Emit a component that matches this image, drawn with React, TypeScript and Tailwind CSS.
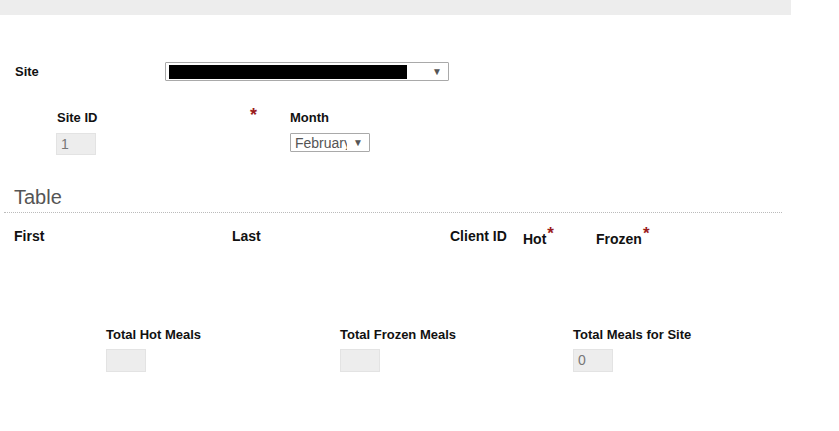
export default function App() {
  return (
    <div className="min-h-screen bg-white font-['Liberation_Sans',Arial,sans-serif] text-[13px] text-[#111]">
      {/* top bar */}
      <div className="h-[15px] w-[791px] bg-[#ededed]" />

      {/* Site row */}
      <div className="mt-[47px] flex h-[19px] items-center pl-[15px]">
        <div className="w-[150px] font-bold">Site</div>
        <div className="flex h-[19px] w-[284px] items-center rounded-[1px] border border-[#a9a9a9] bg-white pl-[3px] pr-[6px]">
          <div className="h-[14px] w-[238px] bg-black" />
          <div className="flex-1" />
          <span className="text-[10px] leading-none text-[#555]">▼</span>
        </div>
      </div>

      {/* Site ID / Month */}
      <div className="mt-[29px] flex pl-[56px]">
        <div className="w-[194px]">
          <div className="h-[15px] pl-px font-bold leading-[15px]">Site ID</div>
          <div className="mt-[8px] flex h-[22px] w-[40px] items-center border border-[#e3e3e3] bg-[#ededed] pl-[4px] text-[14px] text-[#777]">
            1
          </div>
        </div>
        <div className="w-[40px]">
          <span className="-mt-[4px] block text-[18px] font-bold leading-[18px] text-[#9b1c1c]">*</span>
        </div>
        <div>
          <div className="h-[15px] font-bold leading-[15px]">Month</div>
          <div className="mt-[8px] flex h-[19px] w-[80px] items-center overflow-hidden rounded-[1px] border border-[#a9a9a9] pl-[4px] pr-[6px]">
            <span className="w-[52px] shrink-0 overflow-hidden whitespace-nowrap text-[14px] leading-none text-[#555]">February</span>
            <div className="flex-1" />
            <span className="text-[10px] leading-none text-[#555]">▼</span>
          </div>
        </div>
      </div>

      {/* Table heading */}
      <div className="ml-[4px] mt-[30px] w-[778px] border-b border-dotted border-[#bbb] pb-[3px] pl-[10px]">
        <h2 className="text-[20px] leading-[24px] text-[#555]">Table</h2>
      </div>

      {/* Header row */}
      <div className="mt-[16px] flex pl-[14px] text-[14px] font-bold leading-[15px]">
        <div className="w-[218px]">First</div>
        <div className="w-[218px]">Last</div>
        <div className="w-[73px]">Client ID</div>
        <div className="w-[73px] pt-[2px]">
          Hot<span className="relative -top-[5px] ml-px text-[17px] text-[#9b1c1c]">*</span>
        </div>
        <div className="pt-[2px]">
          Frozen<span className="relative -top-[5px] ml-px text-[17px] text-[#9b1c1c]">*</span>
        </div>
      </div>

      {/* Totals */}
      <div className="mt-[80px] flex pl-[106px]">
        {[
          { label: 'Total Hot Meals', value: '', w: 'w-[234px]' },
          { label: 'Total Frozen Meals', value: '', w: 'w-[233px]' },
          { label: 'Total Meals for Site', value: '0', w: 'w-[234px]' },
        ].map((t) => (
          <div key={t.label} className={t.w}>
            <div className="h-[15px] font-bold leading-[15px]">{t.label}</div>
            <div className="mt-[7px] flex h-[23px] w-[40px] items-center border border-[#e3e3e3] bg-[#ededed] pl-[4px] text-[14px] text-[#777]">
              {t.value}
            </div>
          </div>
        ))}
      </div>
    </div>
  )
}
